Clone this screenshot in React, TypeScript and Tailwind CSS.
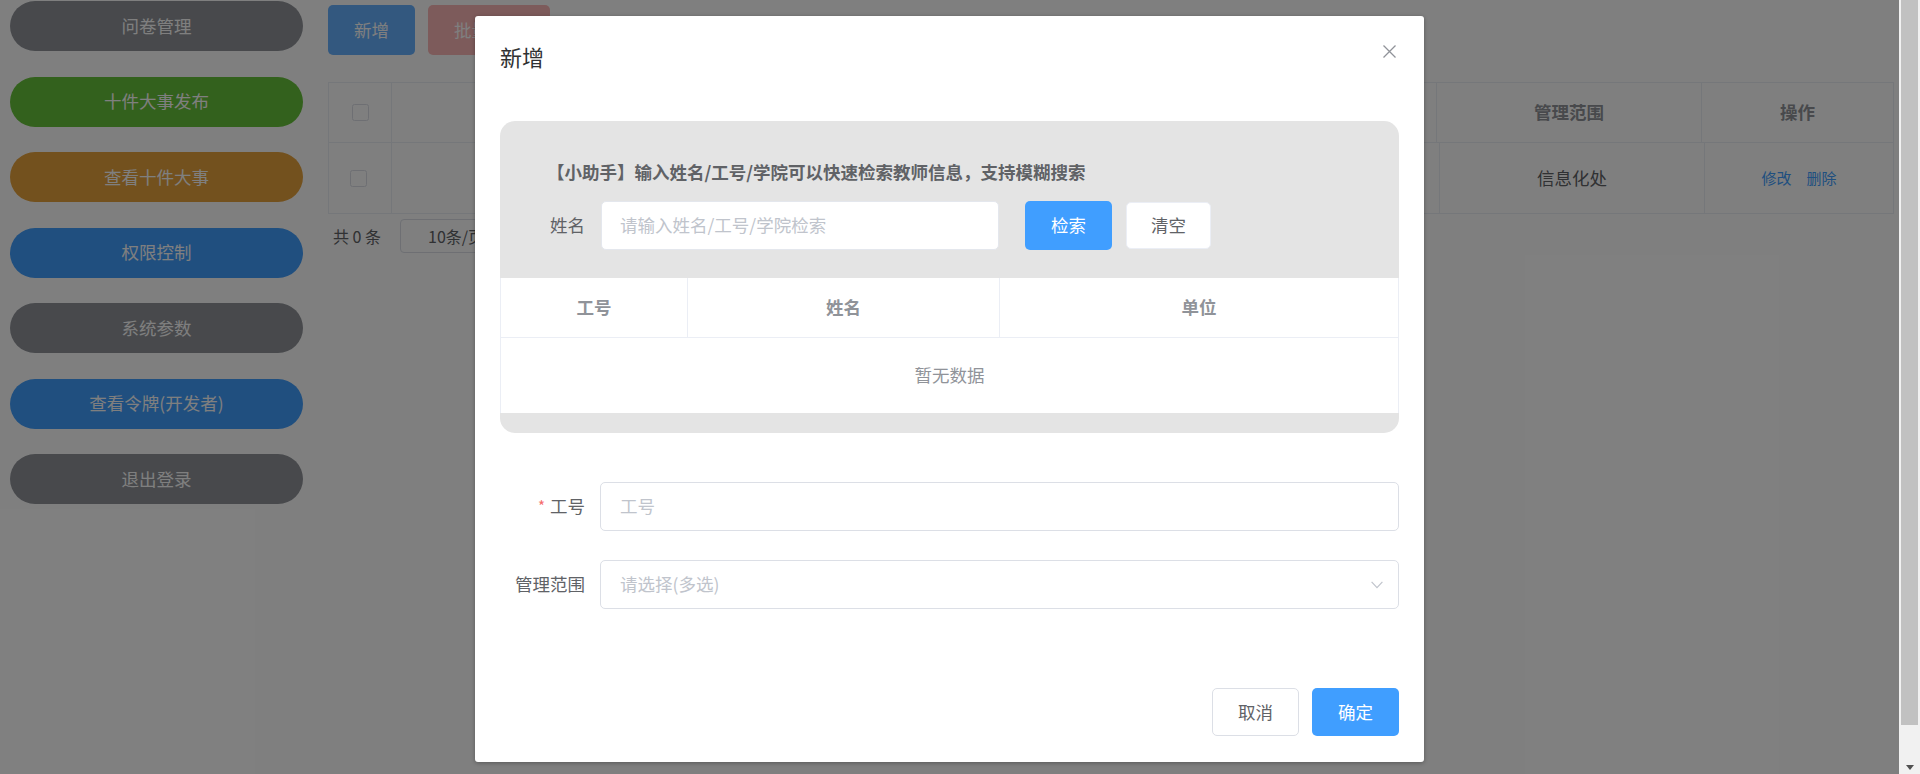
import React from 'react';

const sideButtons = [
    { label: '问卷管理', color: 'bg-[#909399]' },
    { label: '十件大事发布', color: 'bg-[#67c23a]' },
    { label: '查看十件大事', color: 'bg-[#e6a23c]' },
    { label: '权限控制', color: 'bg-[#409eff]' },
    { label: '系统参数', color: 'bg-[#909399]' },
    { label: '查看令牌(开发者)', color: 'bg-[#409eff]' },
    { label: '退出登录', color: 'bg-[#909399]' },
];

function CloseIcon() {
    return (
        <svg width="13" height="13" viewBox="0 0 13 13" fill="none">
            <path d="M0.5 0.5L12.5 12.5M12.5 0.5L0.5 12.5" stroke="#909399" strokeWidth="1.3" />
        </svg>
    );
}

function ChevronDown() {
    return (
        <svg width="12" height="8" viewBox="0 0 12 8" fill="none">
            <path d="M0.6 0.8L6 6.6L11.4 0.8" stroke="#c0c4cc" strokeWidth="1.2" />
        </svg>
    );
}

function Checkbox() {
    return <span className="block w-[17px] h-[17px] bg-white border border-[#dcdfe6] rounded-[2.5px]" />;
}

export default function App() {
    return (
        <div className="w-full h-[774px] overflow-hidden flex font-['Noto_Sans_CJK_SC',sans-serif] text-[17.5px]">
            {/* Page */}
            <div className="relative flex-1 flex bg-white">
                {/* Sidebar */}
                <div className="w-[328px] shrink-0 pl-[10px] pt-[1px] flex flex-col gap-[25.5px]">
                    {sideButtons.map((b) => (
                        <button
                            key={b.label}
                            className={`w-[293px] h-[50px] rounded-full text-white text-[17.5px] ${b.color}`}
                        >
                            {b.label}
                        </button>
                    ))}
                </div>

                {/* Main */}
                <div className="flex-1 pr-[5px] pt-[5px]">
                    <div className="flex gap-[13px]">
                        <button className="w-[87px] h-[50px] rounded-[5px] bg-[#66b1ff] text-white">新增</button>
                        <button className="w-[122px] h-[50px] rounded-[5px] bg-[#fab6b6] text-white">批量删除</button>
                    </div>

                    {/* Table (middle columns sit under the dialog) */}
                    <div className="mt-[27px] border border-[#ebeef5]">
                        <div className="grid grid-cols-[63px_420px_330px_295px_265px_1fr] h-[60px] border-b border-[#ebeef5] font-bold text-[#909399]">
                            <div className="flex items-center justify-center border-r border-[#ebeef5]"><Checkbox /></div>
                            <div className="border-r border-[#ebeef5]" />
                            <div className="border-r border-[#ebeef5]" />
                            <div className="border-r border-[#ebeef5]" />
                            <div className="flex items-center justify-center border-r border-[#ebeef5]">管理范围</div>
                            <div className="flex items-center justify-center">操作</div>
                        </div>
                        <div className="grid grid-cols-[63px_420px_330px_298px_265px_1fr] h-[70px] text-[#606266]">
                            <div className="flex items-center justify-center border-r border-[#ebeef5] pr-[4px]"><Checkbox /></div>
                            <div className="border-r border-[#ebeef5]" />
                            <div className="border-r border-[#ebeef5]" />
                            <div className="border-r border-[#ebeef5]" />
                            <div className="flex items-center justify-center border-r border-[#ebeef5]">信息化处</div>
                            <div className="flex items-center justify-center gap-[15px] text-[15px] text-[#409eff]">
                                <span>修改</span>
                                <span>删除</span>
                            </div>
                        </div>
                    </div>

                    <div className="mt-[5px] flex items-center pl-[5px] text-[16px] text-[#606266]">
                        <span>共 0 条</span>
                        <div className="ml-[19px] w-[125px] h-[34px] border border-[#dcdfe6] rounded-[4px] flex items-center pl-[27px]">
                            10条/页
                        </div>
                    </div>
                </div>

                {/* Overlay + dialog */}
                <div className="absolute inset-0 bg-black/50 flex justify-center items-start pt-[16px]">
                    <div className="w-[949px] bg-white rounded-[3px] shadow-[0_1px_4px_rgba(0,0,0,0.3)] px-[25px] pb-[26px]">
                        {/* Header */}
                        <div className="h-[105px] pt-[25px] flex items-start justify-between">
                            <span className="text-[22px] leading-[30px] text-[#303133]">新增</span>
                            <button className="mt-[4px] mr-[3px]"><CloseIcon /></button>
                        </div>

                        {/* Search helper panel */}
                        <div className="bg-[#e4e4e4] rounded-[15px] pt-[38px] pb-[20px]">
                            <p className="pl-[47px] leading-[25px] font-bold text-[#606266]">
                                【小助手】输入姓名/工号/学院可以快速检索教师信息，支持模糊搜索
                            </p>
                            <div className="mt-[17px] flex items-center h-[49px]">
                                <label className="w-[100px] pr-[15px] text-right text-[#606266]">姓名</label>
                                <div className="w-[398px] h-[49px] ml-[1px] bg-white rounded-[5px] border border-[#e4e7ed] flex items-center pl-[18px] text-[#c0c4cc]">
                                    请输入姓名/工号/学院检索
                                </div>
                                <button className="ml-[26px] w-[87px] h-[49px] rounded-[5px] bg-[#409eff] text-white">检索</button>
                                <button className="ml-[14px] w-[85px] h-[47px] rounded-[5px] bg-white border border-[#ebeef5] text-[#606266]">清空</button>
                            </div>

                            <div className="mt-[28px] bg-white border-x border-[#ebeef5]">
                                <div className="grid grid-cols-[187px_312px_1fr] h-[60px] border-b border-[#ebeef5] font-bold text-[#909399]">
                                    <div className="flex items-center justify-center border-r border-[#ebeef5]">工号</div>
                                    <div className="flex items-center justify-center border-r border-[#ebeef5]">姓名</div>
                                    <div className="flex items-center justify-center">单位</div>
                                </div>
                                <div className="h-[75px] flex items-center justify-center text-[#909399]">暂无数据</div>
                            </div>
                        </div>

                        {/* Form */}
                        <div className="mt-[49px] flex items-center h-[49px]">
                            <label className="w-[100px] pr-[15px] flex justify-end items-center text-[#606266]">
                                <span className="text-[#f56c6c] mr-[5px] text-[15px]">*</span>
                                工号
                            </label>
                            <div className="flex-1 h-[49px] rounded-[5px] border border-[#dcdfe6] flex items-center pl-[19px] text-[#c0c4cc]">
                                工号
                            </div>
                        </div>
                        <div className="mt-[29px] flex items-center h-[49px]">
                            <label className="w-[100px] pr-[15px] text-right text-[#606266]">管理范围</label>
                            <div className="flex-1 h-[49px] rounded-[5px] border border-[#dcdfe6] flex items-center justify-between pl-[19px] pr-[15px] text-[#c0c4cc]">
                                <span>请选择(多选)</span>
                                <ChevronDown />
                            </div>
                        </div>

                        {/* Footer */}
                        <div className="mt-[79px] flex justify-end gap-[13px]">
                            <button className="w-[87px] h-[48px] rounded-[5px] border border-[#dcdfe6] bg-white text-[#606266]">取消</button>
                            <button className="w-[87px] h-[48px] rounded-[5px] bg-[#409eff] text-white">确定</button>
                        </div>
                    </div>
                </div>
            </div>

            {/* Browser scrollbar */}
            <div className="w-[21px] shrink-0 bg-[#f1f1f1] flex flex-col pl-[2px] pr-[2px]">
                <div className="h-[725px] bg-[#c1c1c1]" />
                <div className="flex-1 flex items-end justify-center pb-[4px]">
                    <span className="w-0 h-0 border-l-[4.5px] border-r-[4.5px] border-t-[5px] border-l-transparent border-r-transparent border-t-[#505050]" />
                </div>
            </div>
        </div>
    );
}
